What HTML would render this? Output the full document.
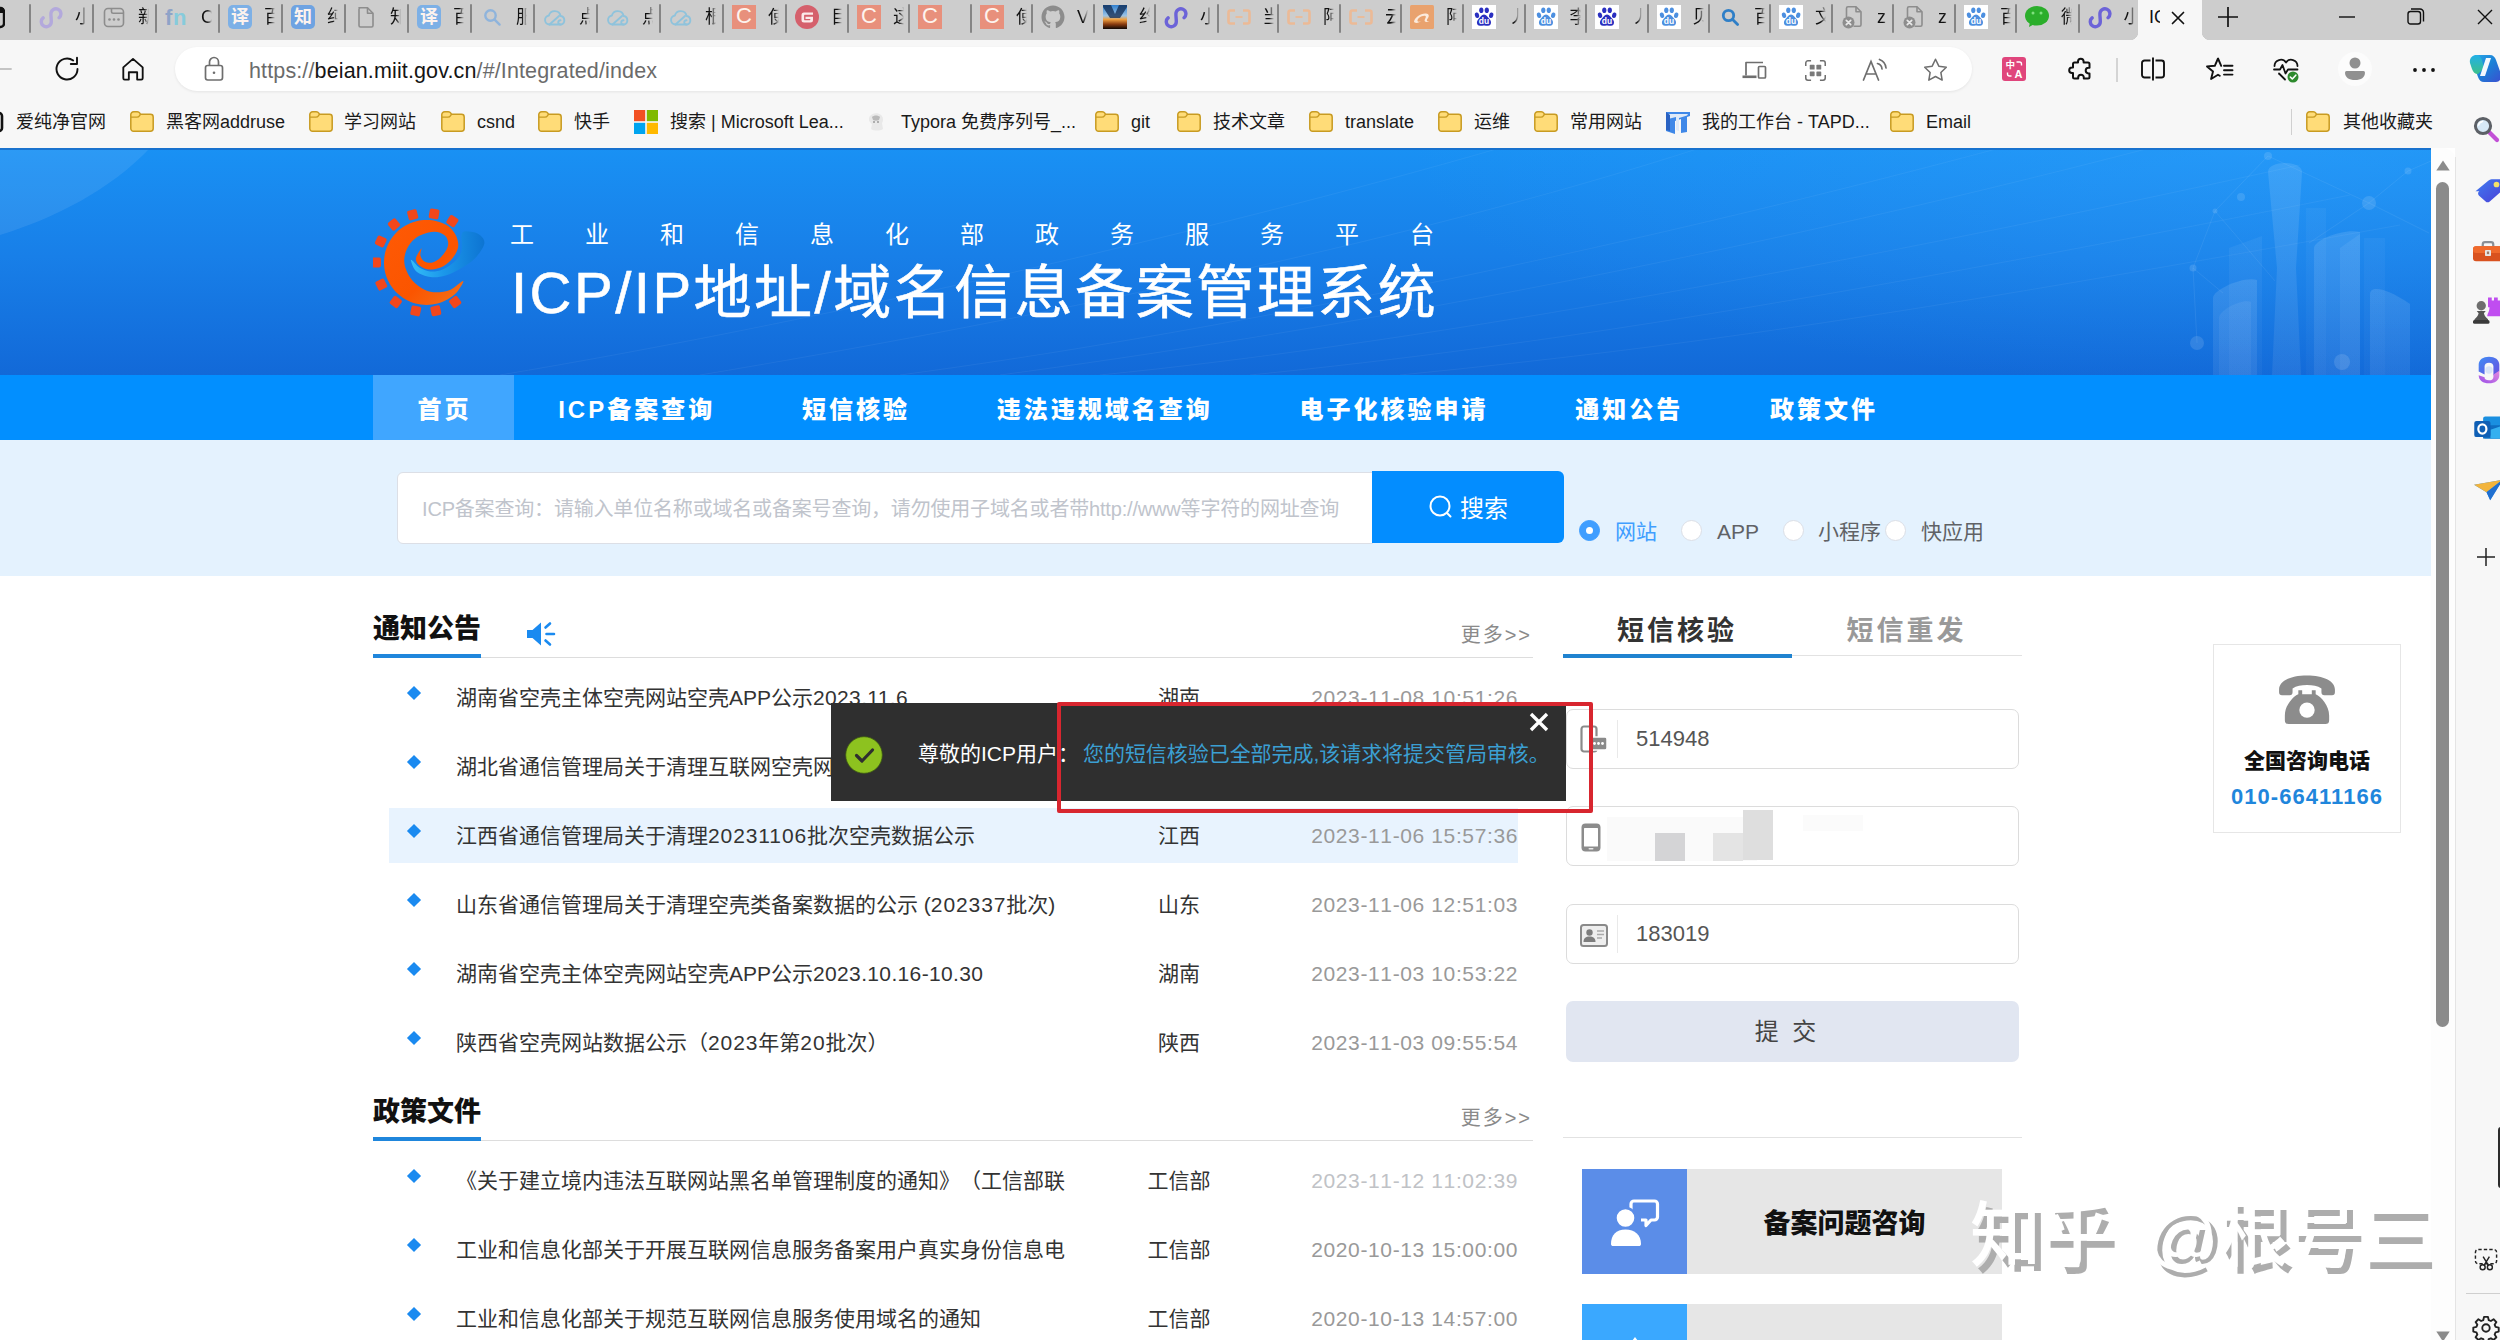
<!DOCTYPE html>
<html lang="zh-CN">
<head>
<meta charset="utf-8">
<title>ICP/IP地址/域名信息备案管理系统</title>
<style>
*{box-sizing:border-box}
html,body{margin:0;padding:0}
body{width:2500px;height:1340px;overflow:hidden;position:relative;background:#fff;font-family:"Liberation Sans","Noto Sans CJK SC",sans-serif;color:#333;text-spacing-trim:space-all}
.abs{position:absolute}
/* ---------- browser chrome ---------- */
#tabs{position:absolute;left:0;top:0;width:2500px;height:40px;background:#cdcdcd}
#addr{position:absolute;left:0;top:40px;width:2500px;height:57px;background:#f7f7f7}
#bm{position:absolute;left:0;top:97px;width:2500px;height:51px;background:#f7f7f7}
#urlpill{position:absolute;left:175px;top:7px;width:1797px;height:44px;border-radius:22px;background:#fff;box-shadow:0 1px 3px rgba(0,0,0,.08)}
.tab{position:absolute;top:0;height:40px}
.tab .sep{position:absolute;left:0;top:4px;width:2px;height:29px;background:#858585;border-radius:1px}
.tab .tic{position:absolute;left:10px;top:5px;width:24px;height:24px;display:block}
.tab .tic svg{display:block}
.tab .ttx{position:absolute;left:46px;top:4px;width:11px;height:28px;overflow:hidden;font-size:18px;line-height:26px;color:#111;white-space:nowrap;-webkit-mask-image:linear-gradient(90deg,#000 55%,transparent 100%);mask-image:linear-gradient(90deg,#000 55%,transparent 100%)}
.tab0{position:absolute;left:0;top:0;width:30px;height:40px}
#acttab{position:absolute;left:2138px;top:0;width:64px;height:41px;background:#f7f7f7;border-radius:0}
#acttab:before,#acttab:after{content:"";position:absolute;bottom:1px;width:8px;height:8px}
#acttab:before{left:-8px;background:radial-gradient(circle at 0 0,transparent 8px,#f7f7f7 8.500px)}
#acttab:after{right:-8px;background:radial-gradient(circle at 100% 0,transparent 8px,#f7f7f7 8.500px)}
#acttab .att{position:absolute;left:11px;top:4px;width:11px;overflow:hidden;font-size:18px;line-height:26px;color:#111;white-space:nowrap}
#acttab .atx{position:absolute;left:33px;top:11px}
#urlpill{position:absolute}
#url{position:absolute;left:74px;top:0;font-size:21.500px;line-height:48px;white-space:nowrap;letter-spacing:.130px}
.bic{position:absolute;top:13px}
.btx{position:absolute;top:0;font-size:18px;line-height:50px;color:#1a1a1a;white-space:nowrap}
/* ---------- page ---------- */
#page{position:absolute;left:0;top:148px;width:2431px;height:1192px;overflow:hidden;background:#fff}
#banner{position:absolute;left:0;top:0;width:2431px;height:227px;background:linear-gradient(180deg,#1991f4 0%,#187fe8 48%,#1269d8 100%)}
#nav{position:absolute;left:0;top:227px;width:2431px;height:65.500px;background:#028fff}
#search{position:absolute;left:0;top:292px;width:2431px;height:136px;background:#e4f2fe}

#logo{position:absolute;left:373px;top:59px;width:110px;height:110px}
#sub{position:absolute;left:510px;top:67px;font-size:24px;line-height:40px;letter-spacing:51px;color:#fff;white-space:nowrap;font-weight:400}
#ttl{position:absolute;left:511px;top:106.500px;font-size:58px;line-height:76px;letter-spacing:2.500px;color:#fff;white-space:nowrap;font-weight:400;-webkit-text-stroke:.600px #fff}
#navin{position:absolute;left:373px;top:0;height:65px;white-space:nowrap;font-size:0}
.ni{display:inline-block;height:65px;line-height:69px;padding:0 42.400px 0 44.400px;font-size:24px;font-weight:900;letter-spacing:3px;color:#fff}
.ni.act{background:#40a6ff}
#sinput{position:absolute;left:397px;top:32px;width:976px;height:72px;border:1px solid #dcdfe6;border-radius:6px 0 0 6px;background:#fff;font-size:20px;line-height:72px;color:#c0c4cc;padding-left:24px;white-space:nowrap;overflow:hidden;letter-spacing:-.180px}
#sbtn{position:absolute;left:1372px;top:31px;width:192px;height:72px;background:#038dff;border-radius:0 6px 6px 0;color:#fff;font-size:24px;line-height:72px}
#sbtn svg{position:absolute;left:56px;top:23px}
#sbtn span{position:absolute;left:88px;top:1.500px}
.rad{position:absolute;top:80px;width:21px;height:21px;border-radius:50%;background:#fff;border:1px solid #dcdfe6}
.rad.on{background:#409eff;border-color:#409eff}
.rad.on:after{content:"";position:absolute;left:6px;top:6px;width:7px;height:7px;border-radius:50%;background:#fff}
.rl{position:absolute;top:75px;font-size:21px;line-height:34px;color:#606266;white-space:nowrap}
#left{position:absolute;left:373px;top:0;width:1160px;height:1192px}
.sech{position:absolute;left:0;width:1160px;height:58px;border-bottom:1px solid #ddd}
.secht{position:absolute;left:0;top:0;height:58px;font-size:27px;font-weight:900;line-height:58px;color:#111;border-bottom:4px solid #1f86dc;white-space:nowrap}
.horn{position:absolute;left:153px;top:21px}
.more{position:absolute;right:1px;top:17px;font-size:20px;line-height:36px;color:#8a8a8a;letter-spacing:2px}
.row{position:absolute;left:16px;width:1129px;height:55px;font-size:21px;line-height:55px;color:#333;white-space:nowrap}
.row.hl{background:#e8f3fe}
.dia{position:absolute;left:20px;top:18px;width:10px;height:10px;background:#1a8af0;transform:rotate(45deg)}
.rt{position:absolute;left:67px;top:0}
.dg{letter-spacing:.900px}
.dg2{letter-spacing:.350px}
.rp{position:absolute;left:730px;top:0;width:120px;text-align:center}
.rd{position:absolute;right:0;top:0;color:#999;font-size:21px;letter-spacing:.620px;font-kerning:none}
#right{position:absolute;left:1563px;top:448px;width:459px;height:760px}
.rtab{position:absolute;top:3px;height:58px;line-height:64px;font-size:27px;font-weight:700;letter-spacing:3px;text-align:center;white-space:nowrap}
.inp{position:absolute;left:3px;width:453px;height:60px;border:1px solid #dcdcdc;border-radius:7px;background:#fff}
.inp .pre{position:absolute;left:12px;top:14px}
.inp .dv{position:absolute;left:50px;top:10px;width:1px;height:38px;background:#e9e9e9}
.inp .val{position:absolute;left:69px;top:0;font-size:22px;line-height:58px;color:#555;letter-spacing:0}
.mz{position:absolute;display:block}
#submit{position:absolute;left:3px;top:405px;width:453px;height:61px;border-radius:7px;background:#e1e6f1;font-size:24px;line-height:61px;color:#444;text-align:center;padding-right:14px;word-spacing:7px}
.card{position:absolute;left:19px;width:420px;height:105px;background:#e6e6e6}
.cic{position:absolute;left:0;top:0;width:105px;height:105px}
.cic svg{position:absolute;left:25px;top:25px}
.ctx{position:absolute;left:105px;top:0;width:315px;height:105px;line-height:111px;font-size:27px;font-weight:900;color:#111;text-align:center}
#tel{position:absolute;left:2213px;top:496px;width:188px;height:189px;border:1px solid #e6e6e6;background:#fff}
#tel1{position:absolute;left:0;top:98px;width:186px;text-align:center;font-size:21px;font-weight:900;color:#111;line-height:36px}
#tel2{position:absolute;left:0;top:134px;width:186px;text-align:center;font-size:22px;font-weight:700;color:#1f86dc;line-height:36px;letter-spacing:1.050px}
#toast{position:absolute;left:831px;top:554.500px;width:734.500px;height:98px;background:#2f2f2f}
#ticon{position:absolute;left:14px;top:33px}
#tt1{position:absolute;left:87px;top:31px;font-size:21px;line-height:40px;color:#fff;white-space:nowrap}
#tt2{position:absolute;left:252px;top:31px;font-size:21px;line-height:40px;color:#3b9fd2;white-space:nowrap;letter-spacing:-.050px}
#tclose{position:absolute;left:698px;top:9.500px}
#redbox{position:absolute;left:1056.500px;top:553.500px;width:536px;height:111.500px;border:4px solid #d8262f;border-radius:2px}
/* ---------- scrollbar + sidebar ---------- */
#sb{position:absolute;left:2431px;top:148px;width:24px;height:1192px;background:#fdfdfd;border-radius:0 12px 0 0;overflow:hidden}
#side{position:absolute;left:2455px;top:97px;width:45px;height:1243px;background:#f7f7f7;overflow:hidden}
#side:before{content:"";position:absolute;left:0;top:60px;width:1px;height:1190px;background:#e4e4e4}
#wm{position:absolute;left:1970px;top:1188px;font-size:71px;line-height:96px;font-weight:500;color:#fff;text-shadow:6px 7px 0 #adadad;white-space:nowrap;word-spacing:14px;font-family:"Liberation Sans","Noto Sans CJK SC",sans-serif}
</style>
</head>
<body>
<div id="tabs">
<!--TABS-->
<div class="tab0"><svg width="14" height="24" viewBox="10 0 14 24" style="position:absolute;left:-9px;top:5px"><rect x="12" y="3" width="11" height="19" rx="3.500" fill="none" stroke="#111" stroke-width="2.400"/><rect x="12" y="3" width="11" height="5" fill="#111"/></svg></div>
<div class="tab" style="left:29px;width:63px"><i class="sep"></i><span class="tic"><svg width="24" height="24" viewBox="0 0 24 24" fill="none" stroke="#b3a9dc" stroke-width="3.4" stroke-linecap="round"><path d="M20.1 12.7A5 5 0 1 0 11.9 8.9C11.9 12 12.3 13.5 12.3 16.7A5 5 0 1 1 4.100 12.900"/></svg></span><span class="ttx">小</span></div>
<div class="tab" style="left:92px;width:63px"><i class="sep"></i><span class="tic"><svg width="24" height="24" viewBox="0 0 24 24" fill="none" stroke="#8d8d8d" stroke-width="1.6"><rect x="2.5" y="3.5" width="19" height="18" rx="3.5"/><path d="M9.5 3.5v3.2a1.6 1.6 0 0 0 1.6 1.6h10.4"/><g fill="#8d8d8d" stroke="none"><circle cx="7.5" cy="14.5" r="1.3"/><circle cx="12" cy="14.5" r="1.3"/><circle cx="16.500" cy="14.5" r="1.3"/></g></svg></span><span class="ttx">新</span></div>
<div class="tab" style="left:155px;width:63px"><i class="sep"></i><span class="tic"><svg width="24" height="24" viewBox="0 0 24 24"><text x="0" y="20" font-family="Liberation Sans,sans-serif" font-weight="700" font-size="22" fill="#8ea3c8">f</text><text x="8" y="20" font-family="Liberation Sans,sans-serif" font-weight="700" font-size="22" fill="#86cbdc">n</text></svg></span><span class="ttx">C</span></div>
<div class="tab" style="left:218px;width:63px"><i class="sep"></i><span class="tic"><svg width="24" height="24" viewBox="0 0 24 24"><rect x="0" y="0" width="24" height="24" rx="5" fill="#7db0e6"/><text x="12" y="18.2" text-anchor="middle" font-family="Liberation Sans,Noto Sans CJK SC,sans-serif" font-weight="700" font-size="18" fill="#fdf3ee">译</text></svg></span><span class="ttx">百</span></div>
<div class="tab" style="left:281px;width:63px"><i class="sep"></i><span class="tic"><svg width="24" height="24" viewBox="0 0 24 24"><rect x="0" y="0" width="24" height="24" rx="5" fill="#6ea3e2"/><text x="12" y="18.2" text-anchor="middle" font-family="Liberation Sans,Noto Sans CJK SC,sans-serif" font-weight="700" font-size="18" fill="#fdf3ee">知</text></svg></span><span class="ttx">纯</span></div>
<div class="tab" style="left:344px;width:63px"><i class="sep"></i><span class="tic"><svg width="24" height="24" viewBox="0 0 24 24" fill="none" stroke="#8d8d8d" stroke-width="1.6" stroke-linejoin="round"><path d="M5 2.8h8.5l5.5 5.5v12.2a1.5 1.5 0 0 1-1.500 1.500h-11a1.500 1.500 0 0 1-1.500-1.500v-16.200a1.500 1.500 0 0 1 1.500-1.500z"/><path d="M13.500 2.800v5.500h5.500"/></svg></span><span class="ttx">知</span></div>
<div class="tab" style="left:407px;width:63px"><i class="sep"></i><span class="tic"><svg width="24" height="24" viewBox="0 0 24 24"><rect x="0" y="0" width="24" height="24" rx="5" fill="#7db0e6"/><text x="12" y="18.2" text-anchor="middle" font-family="Liberation Sans,Noto Sans CJK SC,sans-serif" font-weight="700" font-size="18" fill="#fdf3ee">译</text></svg></span><span class="ttx">百</span></div>
<div class="tab" style="left:470px;width:63px"><i class="sep"></i><span class="tic"><svg width="24" height="24" viewBox="0 0 24 24" fill="none" stroke="#8fb4dc" stroke-width="2.4" stroke-linecap="round"><circle cx="10.500" cy="10.500" r="5.200"/><path d="M14.600 14.600l5 5"/></svg></span><span class="ttx">服</span></div>
<div class="tab" style="left:533px;width:63px"><i class="sep"></i><span class="tic"><svg width="24" height="24" viewBox="0 0 24 24" fill="none" stroke="#8fc3dc" stroke-width="1.900" stroke-linecap="round" stroke-linejoin="round"><path d="M6.500 19.500a4.500 4.500 0 0 1-.6-8.950a6 6 0 0 1 11.700 0.500a4.300 4.300 0 0 1 0.400 8.450z"/><path d="M6.500 19.500l9.500-8.500"/><path d="M17.500 19.500c-3 0-3-4 0-4.200"/></svg></span><span class="ttx">点</span></div>
<div class="tab" style="left:596px;width:63px"><i class="sep"></i><span class="tic"><svg width="24" height="24" viewBox="0 0 24 24" fill="none" stroke="#8fc3dc" stroke-width="1.900" stroke-linecap="round" stroke-linejoin="round"><path d="M6.500 19.500a4.500 4.500 0 0 1-.6-8.950a6 6 0 0 1 11.700 0.500a4.300 4.300 0 0 1 0.400 8.450z"/><path d="M6.500 19.500l9.500-8.500"/><path d="M17.500 19.500c-3 0-3-4 0-4.200"/></svg></span><span class="ttx">点</span></div>
<div class="tab" style="left:659px;width:63px"><i class="sep"></i><span class="tic"><svg width="24" height="24" viewBox="0 0 24 24" fill="none" stroke="#8fc3dc" stroke-width="1.900" stroke-linecap="round" stroke-linejoin="round"><path d="M6.500 19.500a4.500 4.500 0 0 1-.6-8.950a6 6 0 0 1 11.700 0.500a4.300 4.300 0 0 1 0.400 8.450z"/><path d="M6.500 19.500l9.500-8.500"/><path d="M17.500 19.500c-3 0-3-4 0-4.200"/></svg></span><span class="ttx">根</span></div>
<div class="tab" style="left:722px;width:63px"><i class="sep"></i><span class="tic"><svg width="24" height="24" viewBox="0 0 24 24"><rect x="0" y="0" width="24" height="24" rx="0" fill="#e8907c"/><text x="12" y="18.2" text-anchor="middle" font-family="Liberation Sans,Noto Sans CJK SC,sans-serif" font-weight="400" font-size="22" fill="#fdf3ee">C</text></svg></span><span class="ttx">使</span></div>
<div class="tab" style="left:785px;width:62px"><i class="sep"></i><span class="tic"><svg width="24" height="24" viewBox="0 0 24 24"><circle cx="12" cy="12" r="12" fill="#d5606c"/><path d="M18 7.500h-9a2.500 2.500 0 0 0-2.500 2.500v5a2.500 2.500 0 0 0 2.500 2.500h6.500a2.500 2.500 0 0 0 2.500-2.500v-3.200h-7.500v2.200h4.800v0.600a0.600 0.600 0 0 1-0.600 0.600h-5a0.600 0.600 0 0 1-0.600-0.600v-4.200a0.600 0.600 0 0 1 0.600-0.600h8.300z" fill="#fbeaea"/></svg></span><span class="ttx">目</span></div>
<div class="tab" style="left:847px;width:61px"><i class="sep"></i><span class="tic"><svg width="24" height="24" viewBox="0 0 24 24"><rect x="0" y="0" width="24" height="24" rx="0" fill="#e8907c"/><text x="12" y="18.2" text-anchor="middle" font-family="Liberation Sans,Noto Sans CJK SC,sans-serif" font-weight="400" font-size="22" fill="#fdf3ee">C</text></svg></span><span class="ttx">这</span></div>
<div class="tab" style="left:908px;width:62px"><i class="sep"></i><span class="tic"><svg width="24" height="24" viewBox="0 0 24 24"><rect x="0" y="0" width="24" height="24" rx="0" fill="#e8907c"/><text x="12" y="18.2" text-anchor="middle" font-family="Liberation Sans,Noto Sans CJK SC,sans-serif" font-weight="400" font-size="22" fill="#fdf3ee">C</text></svg></span><span class="ttx"></span></div>
<div class="tab" style="left:970px;width:61px"><i class="sep"></i><span class="tic"><svg width="24" height="24" viewBox="0 0 24 24"><rect x="0" y="0" width="24" height="24" rx="0" fill="#e8907c"/><text x="12" y="18.2" text-anchor="middle" font-family="Liberation Sans,Noto Sans CJK SC,sans-serif" font-weight="400" font-size="22" fill="#fdf3ee">C</text></svg></span><span class="ttx">使</span></div>
<div class="tab" style="left:1031px;width:62px"><i class="sep"></i><span class="tic"><svg width="24" height="24" viewBox="0 0 24 24"><path fill="#8c8c8c" d="M12 .5C5.650.5.500 5.650.500 12c0 5.080 3.290 9.390 7.860 10.910.570.110.780-.250.780-.550 0-.270-.010-1.170-.020-2.120-3.200.700-3.870-1.360-3.870-1.360-.520-1.330-1.280-1.680-1.280-1.680-1.040-.710.080-.700.080-.700 1.150.080 1.760 1.190 1.760 1.190 1.030 1.760 2.690 1.250 3.350.960.100-.740.400-1.250.730-1.540-2.550-.290-5.240-1.280-5.240-5.680 0-1.260.450-2.280 1.180-3.090-.120-.290-.510-1.460.110-3.040 0 0 .960-.310 3.160 1.180a10.990 10.990 0 0 1 5.750 0c2.200-1.490 3.160-1.180 3.160-1.180.620 1.580.230 2.750.110 3.040.740.810 1.180 1.830 1.180 3.090 0 4.410-2.690 5.380-5.250 5.670.410.360.780 1.060.780 2.130 0 1.540-.010 2.780-.010 3.160 0 .310.210.670.790.550C20.210 21.390 23.500 17.080 23.500 12 23.500 5.650 18.350.500 12 .500z"/></svg></span><span class="ttx">V</span></div>
<div class="tab" style="left:1093px;width:61px"><i class="sep"></i><span class="tic"><svg width="24" height="24" viewBox="0 0 24 24"><defs><linearGradient id="pg" x1="0" y1="0" x2="0" y2="1"><stop offset="0" stop-color="#2f7fd0"/><stop offset=".45" stop-color="#9cc4e6"/><stop offset=".6" stop-color="#f0a040"/><stop offset=".8" stop-color="#8a3c10"/><stop offset="1" stop-color="#100806"/></linearGradient></defs><rect width="24" height="24" fill="url(#pg)"/><path d="M0 0h8l4 9 4-9h8v2l-7 11h-10l-7-11z" fill="#102a50" opacity=".75"/></svg></span><span class="ttx">约</span></div>
<div class="tab" style="left:1154px;width:62.5px"><i class="sep"></i><span class="tic"><svg width="24" height="24" viewBox="0 0 24 24" fill="none" stroke="#6c63d8" stroke-width="3.4" stroke-linecap="round"><path d="M20.1 12.7A5 5 0 1 0 11.9 8.9C11.9 12 12.3 13.5 12.3 16.7A5 5 0 1 1 4.100 12.900"/></svg></span><span class="ttx">小</span></div>
<div class="tab" style="left:1216.5px;width:60.5px"><i class="sep"></i><span class="tic"><svg width="24" height="24" viewBox="0 0 24 24" fill="none" stroke="#ecba96" stroke-width="2.600" stroke-linejoin="round"><path d="M8 5.500h-4.500a2 2 0 0 0-2 2v9a2 2 0 0 0 2 2h4.500"/><path d="M16 5.500h4.500a2 2 0 0 1 2 2v9a2 2 0 0 1-2 2h-4.500"/><path d="M8.500 12h7" stroke-width="1.800"/></svg></span><span class="ttx">当</span></div>
<div class="tab" style="left:1277px;width:62px"><i class="sep"></i><span class="tic"><svg width="24" height="24" viewBox="0 0 24 24" fill="none" stroke="#ecba96" stroke-width="2.600" stroke-linejoin="round"><path d="M8 5.500h-4.500a2 2 0 0 0-2 2v9a2 2 0 0 0 2 2h4.500"/><path d="M16 5.500h4.500a2 2 0 0 1 2 2v9a2 2 0 0 1-2 2h-4.500"/><path d="M8.500 12h7" stroke-width="1.800"/></svg></span><span class="ttx">阿</span></div>
<div class="tab" style="left:1339px;width:61px"><i class="sep"></i><span class="tic"><svg width="24" height="24" viewBox="0 0 24 24" fill="none" stroke="#ecba96" stroke-width="2.600" stroke-linejoin="round"><path d="M8 5.500h-4.500a2 2 0 0 0-2 2v9a2 2 0 0 0 2 2h4.500"/><path d="M16 5.500h4.500a2 2 0 0 1 2 2v9a2 2 0 0 1-2 2h-4.500"/><path d="M8.500 12h7" stroke-width="1.800"/></svg></span><span class="ttx">云</span></div>
<div class="tab" style="left:1400px;width:62px"><i class="sep"></i><span class="tic"><svg width="24" height="24" viewBox="0 0 24 24"><rect width="24" height="24" rx="1.500" fill="#e9a26e"/><path d="M4 16.500c1-4.500 7-8.500 12-8 3 .4 3.500 2.500 2 4.500-1.500 2-2 3.500 1.500 3.300-3.500 1.500-6 .5-4.500-2.300 1-1.800 1.500-3.300-.8-3.300-3 0-7.200 2.800-6.700 5.300.3 1.300 2.500.8 3.800-.2-1.500 2-6.800 3.200-7.300.7z" fill="#fbeadc"/></svg></span><span class="ttx">阿</span></div>
<div class="tab" style="left:1462px;width:61.5px"><i class="sep"></i><span class="tic"><svg width="24" height="24" viewBox="0 0 24 24"><rect width="24" height="24" fill="#fff"/><g fill="#2a2fc0"><ellipse cx="5" cy="10.200" rx="2.100" ry="2.800" transform="rotate(-15 5 10.200)"/><ellipse cx="9.300" cy="5.300" rx="2.100" ry="2.800"/><ellipse cx="14.800" cy="5.300" rx="2.100" ry="2.800"/><ellipse cx="19.200" cy="10.200" rx="2.100" ry="2.800" transform="rotate(15 19.200 10.200)"/><path d="M12 9.500c2.500 0 3.500 2.500 5.500 4.500 2.200 2.100 2.300 6.500-1.500 6.800-1.800.100-2.500-.400-4-.400s-2.200.500-4 .400c-3.800-.300-3.700-4.700-1.500-6.800 2-2 3-4.500 5.500-4.500z"/></g><text x="12" y="19.300" text-anchor="middle" font-family="Liberation Sans,sans-serif" font-weight="700" font-size="8.500" fill="#fff">du</text></svg></span><span class="ttx">丿</span></div>
<div class="tab" style="left:1523.5px;width:61.5px"><i class="sep"></i><span class="tic"><svg width="24" height="24" viewBox="0 0 24 24"><rect width="24" height="24" fill="#fff"/><g fill="#4c8fe0"><ellipse cx="5" cy="10.200" rx="2.100" ry="2.800" transform="rotate(-15 5 10.200)"/><ellipse cx="9.300" cy="5.300" rx="2.100" ry="2.800"/><ellipse cx="14.800" cy="5.300" rx="2.100" ry="2.800"/><ellipse cx="19.200" cy="10.200" rx="2.100" ry="2.800" transform="rotate(15 19.200 10.200)"/><path d="M12 9.500c2.500 0 3.500 2.500 5.500 4.500 2.200 2.100 2.300 6.500-1.500 6.800-1.800.100-2.500-.400-4-.400s-2.200.500-4 .400c-3.800-.300-3.700-4.700-1.500-6.800 2-2 3-4.500 5.500-4.500z"/></g><text x="12" y="19.300" text-anchor="middle" font-family="Liberation Sans,sans-serif" font-weight="700" font-size="8.500" fill="#fff">du</text></svg></span><span class="ttx">李</span></div>
<div class="tab" style="left:1585px;width:61.5px"><i class="sep"></i><span class="tic"><svg width="24" height="24" viewBox="0 0 24 24"><rect width="24" height="24" fill="#fff"/><g fill="#2a2fc0"><ellipse cx="5" cy="10.200" rx="2.100" ry="2.800" transform="rotate(-15 5 10.200)"/><ellipse cx="9.300" cy="5.300" rx="2.100" ry="2.800"/><ellipse cx="14.800" cy="5.300" rx="2.100" ry="2.800"/><ellipse cx="19.200" cy="10.200" rx="2.100" ry="2.800" transform="rotate(15 19.200 10.200)"/><path d="M12 9.500c2.500 0 3.500 2.500 5.500 4.500 2.200 2.100 2.300 6.500-1.500 6.800-1.800.100-2.500-.400-4-.400s-2.200.500-4 .400c-3.800-.300-3.700-4.700-1.500-6.800 2-2 3-4.500 5.500-4.500z"/></g><text x="12" y="19.300" text-anchor="middle" font-family="Liberation Sans,sans-serif" font-weight="700" font-size="8.500" fill="#fff">du</text></svg></span><span class="ttx">丿</span></div>
<div class="tab" style="left:1646.5px;width:61.5px"><i class="sep"></i><span class="tic"><svg width="24" height="24" viewBox="0 0 24 24"><rect width="24" height="24" fill="#fff"/><g fill="#4c8fe0"><ellipse cx="5" cy="10.200" rx="2.100" ry="2.800" transform="rotate(-15 5 10.200)"/><ellipse cx="9.300" cy="5.300" rx="2.100" ry="2.800"/><ellipse cx="14.800" cy="5.300" rx="2.100" ry="2.800"/><ellipse cx="19.200" cy="10.200" rx="2.100" ry="2.800" transform="rotate(15 19.200 10.200)"/><path d="M12 9.500c2.500 0 3.500 2.500 5.500 4.500 2.200 2.100 2.300 6.500-1.500 6.800-1.800.100-2.500-.400-4-.400s-2.200.500-4 .400c-3.800-.300-3.700-4.700-1.500-6.800 2-2 3-4.500 5.500-4.500z"/></g><text x="12" y="19.300" text-anchor="middle" font-family="Liberation Sans,sans-serif" font-weight="700" font-size="8.500" fill="#fff">du</text></svg></span><span class="ttx">贝</span></div>
<div class="tab" style="left:1708px;width:61px"><i class="sep"></i><span class="tic"><svg width="24" height="24" viewBox="0 0 24 24" fill="none" stroke="#2f7fc7" stroke-width="2.8" stroke-linecap="round"><circle cx="10.500" cy="10.500" r="5.200"/><path d="M14.600 14.600l5 5"/></svg></span><span class="ttx">百</span></div>
<div class="tab" style="left:1769px;width:62px"><i class="sep"></i><span class="tic"><svg width="24" height="24" viewBox="0 0 24 24"><rect width="24" height="24" fill="#fff"/><g fill="#4c8fe0"><ellipse cx="5" cy="10.200" rx="2.100" ry="2.800" transform="rotate(-15 5 10.200)"/><ellipse cx="9.300" cy="5.300" rx="2.100" ry="2.800"/><ellipse cx="14.800" cy="5.300" rx="2.100" ry="2.800"/><ellipse cx="19.200" cy="10.200" rx="2.100" ry="2.800" transform="rotate(15 19.200 10.200)"/><path d="M12 9.500c2.500 0 3.500 2.500 5.500 4.500 2.200 2.100 2.300 6.500-1.500 6.800-1.800.100-2.500-.400-4-.400s-2.200.500-4 .400c-3.800-.300-3.700-4.700-1.500-6.800 2-2 3-4.500 5.500-4.500z"/></g><text x="12" y="19.300" text-anchor="middle" font-family="Liberation Sans,sans-serif" font-weight="700" font-size="8.500" fill="#fff">du</text></svg></span><span class="ttx">文</span></div>
<div class="tab" style="left:1831px;width:61px"><i class="sep"></i><span class="tic"><svg width="24" height="24" viewBox="0 0 24 24"><path d="M7 1.800h8l5 5v13a1.500 1.500 0 0 1-1.500 1.500h-6" fill="none" stroke="#8d8d8d" stroke-width="1.600" stroke-linejoin="round"/><path d="M7 1.800a1.500 1.500 0 0 0-1.500 1.500v9" fill="none" stroke="#8d8d8d" stroke-width="1.600"/><path d="M15 1.800v5h5" fill="none" stroke="#8d8d8d" stroke-width="1.600" stroke-linejoin="round"/><circle cx="7.500" cy="17.500" r="6" fill="#8d8d8d"/><path d="M5.300 15.300l4.400 4.400m0-4.400l-4.400 4.400" stroke="#e8e8e8" stroke-width="1.700" stroke-linecap="round"/></svg></span><span class="ttx">z</span></div>
<div class="tab" style="left:1892px;width:62px"><i class="sep"></i><span class="tic"><svg width="24" height="24" viewBox="0 0 24 24"><path d="M7 1.800h8l5 5v13a1.500 1.500 0 0 1-1.500 1.500h-6" fill="none" stroke="#8d8d8d" stroke-width="1.600" stroke-linejoin="round"/><path d="M7 1.800a1.500 1.500 0 0 0-1.500 1.500v9" fill="none" stroke="#8d8d8d" stroke-width="1.600"/><path d="M15 1.800v5h5" fill="none" stroke="#8d8d8d" stroke-width="1.600" stroke-linejoin="round"/><circle cx="7.500" cy="17.500" r="6" fill="#8d8d8d"/><path d="M5.300 15.300l4.400 4.400m0-4.400l-4.400 4.400" stroke="#e8e8e8" stroke-width="1.700" stroke-linecap="round"/></svg></span><span class="ttx">z</span></div>
<div class="tab" style="left:1954px;width:61px"><i class="sep"></i><span class="tic"><svg width="24" height="24" viewBox="0 0 24 24"><rect width="24" height="24" fill="#fff"/><g fill="#4c8fe0"><ellipse cx="5" cy="10.200" rx="2.100" ry="2.800" transform="rotate(-15 5 10.200)"/><ellipse cx="9.300" cy="5.300" rx="2.100" ry="2.800"/><ellipse cx="14.800" cy="5.300" rx="2.100" ry="2.800"/><ellipse cx="19.200" cy="10.200" rx="2.100" ry="2.800" transform="rotate(15 19.200 10.200)"/><path d="M12 9.500c2.500 0 3.500 2.500 5.500 4.500 2.200 2.100 2.300 6.500-1.500 6.800-1.800.100-2.500-.400-4-.400s-2.200.500-4 .400c-3.800-.300-3.700-4.700-1.500-6.800 2-2 3-4.500 5.500-4.500z"/></g><text x="12" y="19.300" text-anchor="middle" font-family="Liberation Sans,sans-serif" font-weight="700" font-size="8.500" fill="#fff">du</text></svg></span><span class="ttx">百</span></div>
<div class="tab" style="left:2015px;width:62.5px"><i class="sep"></i><span class="tic"><svg width="24" height="24" viewBox="0 0 24 24"><ellipse cx="12" cy="10.800" rx="12" ry="9.800" fill="#2bae2b"/><path d="M5 17l-1 5 5.500-3z" fill="#2bae2b"/><circle cx="8" cy="8" r="1.500" fill="#7fe07f"/><circle cx="16" cy="8" r="1.500" fill="#7fe07f"/></svg></span><span class="ttx">微</span></div>
<div class="tab" style="left:2077.5px;width:59.5px"><i class="sep"></i><span class="tic"><svg width="24" height="24" viewBox="0 0 24 24" fill="none" stroke="#6c63d8" stroke-width="3.4" stroke-linecap="round"><path d="M20.1 12.7A5 5 0 1 0 11.9 8.9C11.9 12 12.3 13.5 12.3 16.7A5 5 0 1 1 4.100 12.900"/></svg></span><span class="ttx">小</span></div>
<!--/TABS-->
<div id="acttab"><span class="att">IC</span><svg class="atx" width="14" height="14" viewBox="0 0 14 14"><path d="M1.500 1.500l11 11m0-11l-11 11" stroke="#111" stroke-width="1.700" fill="none" stroke-linecap="round"/></svg></div>
<svg class="abs" style="left:2217px;top:6px" width="22" height="22" viewBox="0 0 22 22"><path d="M11 1v20M1 11h20" stroke="#111" stroke-width="1.700" fill="none"/></svg>
<svg class="abs" style="left:2339px;top:16px" width="16" height="2" viewBox="0 0 16 2"><path d="M0 1h16" stroke="#111" stroke-width="1.400"/></svg>
<svg class="abs" style="left:2407px;top:8px" width="18" height="18" viewBox="0 0 18 18" fill="none" stroke="#111" stroke-width="1.400"><rect x="1" y="3.500" width="12.500" height="12.500" rx="2.500"/><path d="M4 1h9a3.500 3.500 0 0 1 3.500 3.500v9"/></svg>
<svg class="abs" style="left:2477px;top:9px" width="16" height="16" viewBox="0 0 16 16"><path d="M1 1l14 14m0-14l-14 14" stroke="#111" stroke-width="1.400" fill="none"/></svg>
</div>
<div id="addr">
<svg class="abs" style="left:-14px;top:17px" width="26" height="24" viewBox="0 0 26 24"><path d="M3 12h22M3 12l9-9M3 12l9 9" stroke="#c4c4c4" stroke-width="1.800" fill="none" stroke-linecap="round"/></svg>
<svg class="abs" style="left:53px;top:15px" width="28" height="28" viewBox="0 0 28 28" fill="none" stroke="#111" stroke-width="1.900" stroke-linecap="round" stroke-linejoin="round"><path d="M24.500 14a10.500 10.500 0 1 1-4.300-8.480"/><path d="M24 2.800v6.200h-6.200"/></svg>
<svg class="abs" style="left:121px;top:16px" width="24" height="26" viewBox="0 0 26 28" fill="none" stroke="#111" stroke-width="2" stroke-linejoin="round"><path d="M2.500 12.300l10.500-9.300 10.500 9.300v11.700a1.500 1.500 0 0 1-1.500 1.500h-4.500v-8h-9v8h-4.500a1.500 1.500 0 0 1-1.500-1.500z"/></svg>
<div id="urlpill">
<svg class="abs" style="left:28px;top:8px" width="22" height="28" viewBox="0 0 22 28" fill="none" stroke="#6e6e6e" stroke-width="1.700"><rect x="2.500" y="10.500" width="17" height="14.500" rx="2.200"/><path d="M6.500 10.500v-3.500a4.500 4.500 0 0 1 9 0v3.500"/><circle cx="11" cy="17.800" r="1.300" fill="#6e6e6e" stroke="none"/></svg>
<span id="url"><span style="color:#6b6b6b">https://</span><span style="color:#151515">beian.miit.gov.cn</span><span style="color:#6b6b6b">/#/Integrated/index</span></span>
<svg class="abs" style="left:1565px;top:10px" width="28" height="26" viewBox="0 0 28 26" fill="none" stroke="#6e6e6e" stroke-width="1.700" stroke-linejoin="round"><path d="M23 5.500h-17v13"/><path d="M2.500 19.800h14" stroke-width="2.600"/><rect x="18.500" y="9.500" width="7" height="11.500" rx="1"/></svg>
<svg class="abs" style="left:1628.500px;top:11.500px" width="23" height="23" viewBox="0 0 26 26" fill="none" stroke="#6e6e6e" stroke-width="1.700"><path d="M2 8v-3.500a2.500 2.500 0 0 1 2.500-2.500h3.500M18 2h3.500a2.500 2.500 0 0 1 2.500 2.500v3.500M24 18v3.500a2.500 2.500 0 0 1-2.500 2.500h-3.500M8 24h-3.500a2.500 2.500 0 0 1-2.500-2.500v-3.500"/><g fill="#7a7a7a" stroke="none"><rect x="6.500" y="6.500" width="5.500" height="5.500" rx=".8"/><rect x="14" y="6.500" width="5.500" height="5.500" rx=".8"/><rect x="6.500" y="14" width="5.500" height="5.500" rx=".8"/><rect x="14" y="14" width="5.500" height="5.500" rx=".8"/></g></svg>
<svg class="abs" style="left:1686px;top:9px" width="28" height="28" viewBox="0 0 28 28" fill="none" stroke="#6e6e6e" stroke-width="1.700" stroke-linecap="round"><path d="M2.500 24l7.500-18.500 7.500 18.500M5 18h10"/><path d="M16.500 7.500a6 6 0 0 1 4.500 5.500M18.500 3.500a10 10 0 0 1 6.500 8.500"/></svg>
<svg class="abs" style="left:1746.500px;top:9.500px" width="27" height="25.200" viewBox="0 0 30 28" fill="none" stroke="#6e6e6e" stroke-width="1.700" stroke-linejoin="round"><path d="M15 2.500l3.700 7.700 8.300 1.200-6 5.900 1.400 8.400-7.400-4-7.400 4 1.400-8.400-6-5.900 8.300-1.200z"/></svg>
</div>
<svg class="abs" style="left:2002px;top:17px" width="24" height="24" viewBox="0 0 24 24"><rect width="24" height="24" rx="3" fill="#e0457c"/><text x="3.500" y="11" font-family="Liberation Sans,Noto Sans CJK SC,sans-serif" font-weight="700" font-size="9.500" fill="#fff">中</text><text x="12.500" y="20.500" font-family="Liberation Sans,sans-serif" font-weight="700" font-size="11" fill="#fff">A</text><path d="M14.500 5h3a2 2 0 0 1 2 2v1.500M9.500 19h-2a2 2 0 0 1-2-2v-1.500" fill="none" stroke="#fff" stroke-width="1.400"/></svg>
<svg class="abs" style="left:2068px;top:16px" width="26" height="26" viewBox="0 0 26 26" fill="none" stroke="#111" stroke-width="2" stroke-linejoin="round"><path d="M10 5.500a2.800 2.800 0 0 1 5.600 0v1h4.400a1.500 1.500 0 0 1 1.500 1.500v3.800h-1a2.800 2.800 0 0 0 0 5.600h1v3.600a1.500 1.500 0 0 1-1.500 1.500h-4.200v-1a2.800 2.800 0 0 0-5.600 0v1h-3.700a1.500 1.500 0 0 1-1.500-1.500v-4h-1a2.800 2.800 0 0 1 0-5.600h1v-3.400a1.500 1.500 0 0 1 1.500-1.500h3.500z"/></svg>
<i class="abs" style="left:2116px;top:18px;width:2px;height:24px;background:#d4d4d4"></i>
<svg class="abs" style="left:2140px;top:16px" width="26" height="26" viewBox="0 0 26 26" fill="none" stroke="#111" stroke-width="1.900"><path d="M10.500 4.500h-6a2.500 2.500 0 0 0-2.500 2.500v12a2.500 2.500 0 0 0 2.500 2.500h6M15.500 4.500h6a2.500 2.500 0 0 1 2.500 2.500v12a2.500 2.500 0 0 1-2.500 2.500h-6M13 1.500v23"/></svg>
<svg class="abs" style="left:2206px;top:15px" width="28" height="28" viewBox="0 0 28 28" fill="none" stroke="#111" stroke-width="1.900" stroke-linejoin="round" stroke-linecap="round"><path d="M15.200 10.800l-3.200-7.300-3.200 7.300-7.800.600 6 5-1.900 7.600 6.900-4.200 1.700 1"/><path d="M18 10.800h8.500M18 15.200h8.500M18 19.600h8.500"/></svg>
<svg class="abs" style="left:2272px;top:15px" width="30" height="30" viewBox="0 0 30 30" fill="none" stroke="#111" stroke-width="1.800" stroke-linejoin="round" stroke-linecap="round"><path d="M2.500 11a6.300 6.300 0 0 1 11.500-3.500 6.300 6.300 0 0 1 11.500 3.500"/><path d="M2 14.500h6l2.500-4.500 3 8.500 2.500-4h9.500"/><path d="M7 18.500l6 6"/><circle cx="21" cy="22" r="5.500" fill="#2d8a2d" stroke="none"/><path d="M18.300 22l2 2 3.500-3.800" stroke="#fff" stroke-width="1.600"/></svg>
<div class="abs" style="left:2338px;top:12px;width:34px;height:34px;border-radius:17px;background:#fcfcfc"></div>
<svg class="abs" style="left:2343px;top:16px" width="24" height="26" viewBox="0 0 24 26" fill="#909090"><circle cx="12" cy="7" r="5.500"/><path d="M3.500 15h17a1.500 1.500 0 0 1 1.500 1.500c0 5-4 7.500-10 7.500s-10-2.500-10-7.500a1.500 1.500 0 0 1 1.500-1.500z"/></svg>
<svg class="abs" style="left:2412px;top:27px" width="24" height="6" viewBox="0 0 24 6" fill="#111"><circle cx="3" cy="3" r="1.900"/><circle cx="12" cy="3" r="1.900"/><circle cx="21" cy="3" r="1.900"/></svg>
<svg class="abs" style="left:2468px;top:12px" width="34" height="36" viewBox="0 0 34 36"><defs><linearGradient id="cp1" x1="0" y1="0" x2="1" y2="1"><stop offset="0" stop-color="#2aa9e8"/><stop offset=".5" stop-color="#1b7fd6"/><stop offset="1" stop-color="#3b4fd0"/></linearGradient><linearGradient id="cp2" x1="0" y1="0" x2="0" y2="1"><stop offset="0" stop-color="#23b0e8"/><stop offset="1" stop-color="#3bc08a"/></linearGradient></defs><path d="M8 3h14c3 0 5 2 6 5l5 14c1 4-1 8-5 8h-12c-3 0-5-2-6-5l-5-14c-1-4 1-8 3-8z" fill="url(#cp1)"/><path d="M8 3c3 0 5 2 6 5l2 8-6 6c-3 0-5-2-6-5l-2-6c-1-4 2-8 6-8z" fill="url(#cp2)"/><path d="M18 6l5 0-6 18-5 0z" fill="#fff" opacity=".95"/></svg>
</div>
<div id="bm">
<!--BM-->
<svg class="bic" style="left:-20px" width="24" height="24" viewBox="0 0 24 24"><rect x="3" y="3" width="19" height="18" rx="3" fill="none" stroke="#111" stroke-width="2.600"/></svg>
<span class="btx" style="left:16px">爱纯净官网</span>
<svg class="bic" style="left:130px;top:14px" width="24" height="22" viewBox="0 0 24 22"><path d="M.800 4.200a3 3 0 0 1 3-3.400h3.400c1.300 0 2 .400 2.600 1.300l.700 1.100h10a2.700 2.700 0 0 1 2.700 2.700v11.600a2.700 2.700 0 0 1-2.700 2.700h-17a2.700 2.700 0 0 1-2.700-2.700z" fill="#ffdc78" stroke="#c89b22" stroke-width="1.500"/><path d="M1 6.200h5.800c1.300 0 2.200-.600 2.800-1.600l.800-1.300" fill="none" stroke="#c89b22" stroke-width="1.300"/></svg>
<span class="btx" style="left:166px">黑客网addruse</span>
<svg class="bic" style="left:309px;top:14px" width="24" height="22" viewBox="0 0 24 22"><path d="M.800 4.200a3 3 0 0 1 3-3.400h3.400c1.300 0 2 .400 2.600 1.300l.700 1.100h10a2.700 2.700 0 0 1 2.700 2.700v11.600a2.700 2.700 0 0 1-2.700 2.700h-17a2.700 2.700 0 0 1-2.700-2.700z" fill="#ffdc78" stroke="#c89b22" stroke-width="1.500"/><path d="M1 6.200h5.800c1.300 0 2.200-.600 2.800-1.600l.800-1.300" fill="none" stroke="#c89b22" stroke-width="1.300"/></svg>
<span class="btx" style="left:344px">学习网站</span>
<svg class="bic" style="left:441px;top:14px" width="24" height="22" viewBox="0 0 24 22"><path d="M.800 4.200a3 3 0 0 1 3-3.400h3.400c1.300 0 2 .400 2.600 1.300l.700 1.100h10a2.700 2.700 0 0 1 2.700 2.700v11.600a2.700 2.700 0 0 1-2.700 2.700h-17a2.700 2.700 0 0 1-2.700-2.700z" fill="#ffdc78" stroke="#c89b22" stroke-width="1.500"/><path d="M1 6.200h5.800c1.300 0 2.200-.600 2.800-1.600l.800-1.300" fill="none" stroke="#c89b22" stroke-width="1.300"/></svg>
<span class="btx" style="left:477px">csnd</span>
<svg class="bic" style="left:538px;top:14px" width="24" height="22" viewBox="0 0 24 22"><path d="M.800 4.200a3 3 0 0 1 3-3.400h3.400c1.300 0 2 .400 2.600 1.300l.700 1.100h10a2.700 2.700 0 0 1 2.700 2.700v11.600a2.700 2.700 0 0 1-2.700 2.700h-17a2.700 2.700 0 0 1-2.700-2.700z" fill="#ffdc78" stroke="#c89b22" stroke-width="1.500"/><path d="M1 6.200h5.800c1.300 0 2.200-.600 2.800-1.600l.800-1.300" fill="none" stroke="#c89b22" stroke-width="1.300"/></svg>
<span class="btx" style="left:574px">快手</span>
<svg class="bic" style="left:634px" width="24" height="24" viewBox="0 0 24 24"><rect x="0" y="0" width="11.200" height="11.200" fill="#f25022"/><rect x="12.800" y="0" width="11.200" height="11.200" fill="#7fba00"/><rect x="0" y="12.800" width="11.200" height="11.200" fill="#00a4ef"/><rect x="12.800" y="12.800" width="11.200" height="11.200" fill="#ffb900"/></svg>
<span class="btx" style="left:670px">搜索 | Microsoft Lea...</span>
<svg class="bic" style="left:864px" width="24" height="24" viewBox="0 0 24 24"><path d="M6 6c2-3 8-4 11-1 2 2 3 5 1 8l1 6c-3 2-9 2-12 0l1-5c-3-2-4-5-2-8z" fill="#e9e9e9"/><path d="M8 7c2-2 6-2 8 0l-1 3c-2 1-4 1-6 0z" fill="#b9b9b9"/><circle cx="10" cy="12" r="1" fill="#9a9a9a"/><circle cx="14" cy="12" r="1" fill="#9a9a9a"/></svg>
<span class="btx" style="left:901px">Typora 免费序列号_...</span>
<svg class="bic" style="left:1095px;top:14px" width="24" height="22" viewBox="0 0 24 22"><path d="M.800 4.200a3 3 0 0 1 3-3.400h3.400c1.300 0 2 .400 2.600 1.300l.700 1.100h10a2.700 2.700 0 0 1 2.700 2.700v11.600a2.700 2.700 0 0 1-2.700 2.700h-17a2.700 2.700 0 0 1-2.700-2.700z" fill="#ffdc78" stroke="#c89b22" stroke-width="1.500"/><path d="M1 6.200h5.800c1.300 0 2.200-.600 2.800-1.600l.800-1.300" fill="none" stroke="#c89b22" stroke-width="1.300"/></svg>
<span class="btx" style="left:1131px">git</span>
<svg class="bic" style="left:1177px;top:14px" width="24" height="22" viewBox="0 0 24 22"><path d="M.800 4.200a3 3 0 0 1 3-3.400h3.400c1.300 0 2 .400 2.600 1.300l.700 1.100h10a2.700 2.700 0 0 1 2.700 2.700v11.600a2.700 2.700 0 0 1-2.700 2.700h-17a2.700 2.700 0 0 1-2.700-2.700z" fill="#ffdc78" stroke="#c89b22" stroke-width="1.500"/><path d="M1 6.200h5.800c1.300 0 2.200-.600 2.800-1.600l.800-1.300" fill="none" stroke="#c89b22" stroke-width="1.300"/></svg>
<span class="btx" style="left:1213px">技术文章</span>
<svg class="bic" style="left:1309px;top:14px" width="24" height="22" viewBox="0 0 24 22"><path d="M.800 4.200a3 3 0 0 1 3-3.400h3.400c1.300 0 2 .400 2.600 1.300l.700 1.100h10a2.700 2.700 0 0 1 2.700 2.700v11.600a2.700 2.700 0 0 1-2.700 2.700h-17a2.700 2.700 0 0 1-2.700-2.700z" fill="#ffdc78" stroke="#c89b22" stroke-width="1.500"/><path d="M1 6.200h5.800c1.300 0 2.200-.600 2.800-1.600l.800-1.300" fill="none" stroke="#c89b22" stroke-width="1.300"/></svg>
<span class="btx" style="left:1345px">translate</span>
<svg class="bic" style="left:1438px;top:14px" width="24" height="22" viewBox="0 0 24 22"><path d="M.800 4.200a3 3 0 0 1 3-3.400h3.400c1.300 0 2 .400 2.600 1.300l.700 1.100h10a2.700 2.700 0 0 1 2.700 2.700v11.600a2.700 2.700 0 0 1-2.700 2.700h-17a2.700 2.700 0 0 1-2.700-2.700z" fill="#ffdc78" stroke="#c89b22" stroke-width="1.500"/><path d="M1 6.200h5.800c1.300 0 2.200-.600 2.800-1.600l.800-1.300" fill="none" stroke="#c89b22" stroke-width="1.300"/></svg>
<span class="btx" style="left:1474px">运维</span>
<svg class="bic" style="left:1534px;top:14px" width="24" height="22" viewBox="0 0 24 22"><path d="M.800 4.200a3 3 0 0 1 3-3.400h3.400c1.300 0 2 .400 2.600 1.300l.700 1.100h10a2.700 2.700 0 0 1 2.700 2.700v11.600a2.700 2.700 0 0 1-2.700 2.700h-17a2.700 2.700 0 0 1-2.700-2.700z" fill="#ffdc78" stroke="#c89b22" stroke-width="1.500"/><path d="M1 6.200h5.800c1.300 0 2.200-.600 2.800-1.600l.800-1.300" fill="none" stroke="#c89b22" stroke-width="1.300"/></svg>
<span class="btx" style="left:1570px">常用网站</span>
<svg class="bic" style="left:1666px" width="24" height="24" viewBox="0 0 24 24"><path d="M0 2h24v4l-3 1v15l-6 1v-14l-6 2v13l-9-3z" fill="#3f88e8"/><path d="M2 4h20l-1 1.500-8 2.500v13l-3-1v-13l-8 2z" fill="#dfeaf8"/><path d="M0 2l4 3v16l-4-1z" fill="#2a62c2"/></svg>
<span class="btx" style="left:1702px">我的工作台 - TAPD...</span>
<svg class="bic" style="left:1890px;top:14px" width="24" height="22" viewBox="0 0 24 22"><path d="M.800 4.200a3 3 0 0 1 3-3.400h3.400c1.300 0 2 .400 2.600 1.300l.700 1.100h10a2.700 2.700 0 0 1 2.700 2.700v11.600a2.700 2.700 0 0 1-2.700 2.700h-17a2.700 2.700 0 0 1-2.700-2.700z" fill="#ffdc78" stroke="#c89b22" stroke-width="1.500"/><path d="M1 6.200h5.800c1.300 0 2.200-.600 2.800-1.600l.800-1.300" fill="none" stroke="#c89b22" stroke-width="1.300"/></svg>
<span class="btx" style="left:1926px">Email</span>
<svg class="bic" style="left:2306px;top:14px" width="24" height="22" viewBox="0 0 24 22"><path d="M.800 4.200a3 3 0 0 1 3-3.400h3.400c1.300 0 2 .400 2.600 1.300l.700 1.100h10a2.700 2.700 0 0 1 2.700 2.700v11.600a2.700 2.700 0 0 1-2.700 2.700h-17a2.700 2.700 0 0 1-2.700-2.700z" fill="#ffdc78" stroke="#c89b22" stroke-width="1.500"/><path d="M1 6.200h5.800c1.300 0 2.200-.600 2.800-1.600l.800-1.300" fill="none" stroke="#c89b22" stroke-width="1.300"/></svg>
<span class="btx" style="left:2343px">其他收藏夹</span>
<i class="abs" style="left:2291px;top:12px;width:1px;height:26px;background:#d0d0d0"></i>
<!--/BM-->
</div>
<div id="page">
  <div id="banner">
    <div id="bannerart">
<!--ART-->
<svg width="2431" height="227" viewBox="0 0 2431 227" style="position:absolute;left:0;top:0">
<defs>
<linearGradient id="bw" x1="0" y1="0" x2="1" y2="0"><stop offset="0" stop-color="#fff" stop-opacity=".09"/><stop offset="1" stop-color="#fff" stop-opacity="0"/></linearGradient>
<radialGradient id="br" cx="0.93" cy="0" r="0.35" gradientTransform="scale(1 3)"><stop offset="0" stop-color="#3aa8ff" stop-opacity=".35"/><stop offset="1" stop-color="#3aa8ff" stop-opacity="0"/></radialGradient>
<linearGradient id="bt" x1="0" y1="0" x2="0" y2="1"><stop offset="0" stop-color="#fff" stop-opacity=".110"/><stop offset="1" stop-color="#fff" stop-opacity=".07"/></linearGradient>
</defs>
<rect width="2431" height="227" fill="url(#br)"/>
<path d="M0 0h150c-40 42-95 70-150 87z" fill="#fff" opacity=".085"/>
<g fill="none" stroke="#fff" stroke-opacity=".05" stroke-width="1">
<path d="M900 227c300-40 700-120 1100-227"/><path d="M1000 227c300-40 700-110 1150-227"/><path d="M1100 227c300-30 700-100 1200-210"/><path d="M1250 227c300-30 600-80 1100-180"/><path d="M1400 227c300-30 500-60 1000-150"/><path d="M700 227c300-50 700-130 1000-227"/><path d="M500 227c300-50 700-140 1000-227"/>
</g>
<g fill="url(#bt)">
<path d="M2268 24c0-12 34-12 34 0l-6 96 5 107h-29l5-107z"/>
<path d="M2213 150c0-8 30-22 44-18v95h-44z"/>
<path d="M2219 170c0-8 24-20 32-16v73h-32z" opacity=".6"/>
<path d="M2229 100l33-12v139h-33z" opacity=".45"/>
<path d="M2314 100c0-8 30-20 46-16v143h-46z"/>
<path d="M2340 100l20-14v141h-20z" opacity=".6"/>
<path d="M2306 60h20v167h-20z" opacity=".35"/>
<path d="M2370 146c0-8 14-8 40 10v71h-40z"/>
<path d="M2364 90h21v137h-21z" opacity=".35"/>
</g>
<g fill="#fff" fill-opacity=".12"><circle cx="2268" cy="8" r="4"/><circle cx="2241" cy="49" r="4"/><circle cx="2215" cy="63" r="2.500"/><circle cx="2193" cy="120" r="3.500"/><circle cx="2197" cy="195" r="7"/><circle cx="2369" cy="55" r="7"/><circle cx="2408" cy="23" r="3.500"/><circle cx="2342" cy="214" r="8"/></g>
<g fill="none" stroke="#fff" stroke-opacity=".07" stroke-width="1"><path d="M2268 8l-53 55-22 57 4 75M2215 63l60 70M2268 8l101 47 39-32M2369 55l60 30M2369 55l-60 40M2408 23l23-10M2193 120l30 25"/></g>
<rect width="2431" height="2" fill="#1769c4" opacity=".8"/>
</svg>

<!--/ART-->
</div>
    <div id="logo">
<!--LOGO-->
<svg width="113" height="111" viewBox="0 0 113 111"><defs><linearGradient id="lgs" x1="0" y1="0" x2="1" y2="0"><stop offset="0" stop-color="#33bdf8"/><stop offset=".45" stop-color="#1b97ea"/><stop offset="1" stop-color="#0d74d2"/></linearGradient><linearGradient id="lge" x1="0" y1="0" x2="1" y2="1"><stop offset="0" stop-color="#ff5a05"/><stop offset=".6" stop-color="#fb5500"/><stop offset="1" stop-color="#f2731c"/></linearGradient></defs><path d="M37.9 53.5C38.4 55.2 40.1 61.7 43.4 64.5C46.7 67.3 52.6 69.4 57.5 70.1C62.4 70.8 67.6 70.0 72.6 68.6C77.6 67.2 83.0 64.2 87.7 61.5C92.4 58.8 97.1 56.0 100.8 52.5C104.5 49.0 108.2 43.6 109.9 40.4C111.6 37.2 111.7 35.5 111.0 33.3C110.3 31.1 108.0 28.7 105.8 27.3C103.6 25.9 100.6 24.9 97.8 24.8C95.0 24.7 90.5 23.2 89.0 26.5C87.5 29.8 89.7 39.7 88.5 44.4C87.3 49.1 84.9 51.5 81.7 54.5C78.5 57.5 73.6 60.8 69.6 62.5C65.6 64.2 61.4 64.8 57.5 64.5C53.6 64.2 49.2 62.2 46.4 60.5C43.5 58.8 41.8 55.7 40.4 54.5C39.0 53.3 37.4 51.8 37.9 53.5Z" fill="url(#lgs)"/><g fill="#f2471c"><rect x="74.5" y="9.2" width="9.800" height="9.800" rx="1.800" transform="rotate(33.0 79.4 14.1)"/><rect x="56.2" y="2.0" width="9.800" height="9.800" rx="1.800" transform="rotate(10.0 61.1 6.9)"/><rect x="34.8" y="2.9" width="9.800" height="9.800" rx="1.800" transform="rotate(-15.0 39.7 7.8)"/><rect x="16.1" y="12.5" width="9.800" height="9.800" rx="1.800" transform="rotate(-39.6 21.0 17.4)"/><rect x="2.9" y="29.5" width="9.800" height="9.800" rx="1.800" transform="rotate(-64.7 7.8 34.4)"/><rect x="-1.8" y="50.6" width="9.800" height="9.800" rx="1.800" transform="rotate(270.0 3.1 55.5)"/><rect x="3.4" y="72.7" width="9.800" height="9.800" rx="1.800" transform="rotate(243.4 8.3 77.6)"/><rect x="17.9" y="90.1" width="9.800" height="9.800" rx="1.800" transform="rotate(217.0 22.8 95.0)"/><rect x="37.8" y="99.0" width="9.800" height="9.800" rx="1.800" transform="rotate(191.5 42.7 103.9)"/><rect x="57.9" y="98.9" width="9.800" height="9.800" rx="1.800" transform="rotate(168.0 62.8 103.8)"/><rect x="77.3" y="90.1" width="9.800" height="9.800" rx="1.800" transform="rotate(143.0 82.2 95.0)"/></g><path d="M90.2 74.1C91.2 74.6 86.1 82.5 83.6 85.6C81.0 88.6 77.9 90.5 74.8 92.3C71.6 94.1 68.0 95.6 64.5 96.6C61.0 97.5 57.2 98.0 53.5 98.0C49.8 98.0 46.0 97.5 42.5 96.6C39.0 95.6 35.4 94.1 32.3 92.3C29.1 90.5 26.0 88.1 23.4 85.6C20.9 83.0 18.5 79.9 16.7 76.8C14.9 73.6 13.4 70.0 12.4 66.5C11.5 63.0 11.0 59.2 11.0 55.5C11.0 51.8 11.5 48.0 12.4 44.5C13.4 41.0 14.9 37.4 16.7 34.2C18.5 31.1 20.9 28.0 23.4 25.4C26.0 22.9 29.1 20.5 32.2 18.7C35.4 16.9 39.0 15.4 42.5 14.4C46.0 13.5 49.8 13.0 53.5 13.0C57.2 13.0 61.0 13.5 64.5 14.4C68.0 15.4 71.8 16.6 74.8 18.7C77.7 20.8 80.4 23.9 82.1 26.9C83.9 29.8 84.9 33.4 85.2 36.3C85.5 39.2 85.0 41.5 83.7 44.4C82.4 47.3 80.3 50.8 77.6 53.5C74.9 56.2 71.3 59.0 67.6 60.5C63.9 62.0 59.0 62.8 55.5 62.5C52.0 62.2 48.5 60.3 46.4 58.5C44.3 56.7 42.6 54.4 42.9 51.5C43.2 48.6 47.6 41.9 48.4 41.4C49.1 40.9 46.9 46.2 47.4 48.4C47.9 50.6 49.5 53.3 51.5 54.5C53.5 55.7 56.8 56.2 59.5 55.5C62.2 54.8 65.2 52.6 67.6 50.4C69.9 48.2 72.3 44.9 73.6 42.4C74.8 39.9 75.4 37.6 75.1 35.3C74.8 32.9 73.9 30.1 71.6 28.3C69.3 26.6 65.5 24.8 61.5 24.8C57.5 24.8 51.4 26.4 47.4 28.3C43.4 30.2 40.0 32.9 37.4 36.3C34.8 39.6 32.6 44.4 31.8 48.4C30.9 52.4 31.0 56.3 32.3 60.5C33.6 64.7 36.2 69.9 39.4 73.6C42.6 77.3 47.5 80.8 51.5 82.7C55.5 84.6 59.1 85.2 63.5 85.2C67.8 85.2 73.1 84.6 77.6 82.7C82.0 80.8 89.2 73.6 90.2 74.1Z" fill="url(#lge)"/></svg>
<!--/LOGO-->
</div>
    <div id="sub">工业和信息化部政务服务平台</div>
    <div id="ttl">ICP/IP地址/域名信息备案管理系统</div>
  </div>
  <div id="nav">
    <div id="navin"><span class="ni act">首页</span><span class="ni">ICP备案查询</span><span class="ni">短信核验</span><span class="ni">违法违规域名查询</span><span class="ni">电子化核验申请</span><span class="ni">通知公告</span><span class="ni">政策文件</span></div>
  </div>
  <div id="search">
    <div id="sinput">ICP备案查询：请输入单位名称或域名或备案号查询，请勿使用子域名或者带http://www等字符的网址查询</div>
    <div id="sbtn"><svg width="26" height="26" viewBox="0 0 26 26" fill="none" stroke="#fff" stroke-width="2" stroke-linecap="round"><circle cx="12" cy="12" r="9.500"/><path d="M19 19l3.500 3.500"/></svg><span>搜索</span></div>
    <span class="rad on" style="left:1579px"></span><span class="rl" style="left:1615px;color:#409eff">网站</span>
    <span class="rad" style="left:1681px"></span><span class="rl" style="left:1717px">APP</span>
    <span class="rad" style="left:1783px"></span><span class="rl" style="left:1818px">小程序</span>
    <span class="rad" style="left:1885px"></span><span class="rl" style="left:1921px">快应用</span>
  </div>
  <div id="left">
<!--LEFT-->
<div class="sech" style="top:452px"><span class="secht">通知公告</span><svg class="horn" width="30" height="26" viewBox="0 0 30 26"><path d="M1 9h5.500l8.500-7.500v23l-8.500-7.500h-5.500z" fill="#1a8af0"/><path d="M19.500 6.500l4.500-4M20.500 13h7.500M19.500 19.500l4.500 4" stroke="#1a8af0" stroke-width="2.600" fill="none" stroke-linecap="round"/></svg><span class="more">更多&gt;&gt;</span></div>
<div class="row" style="top:521.5px"><i class="dia"></i><span class="rt">湖南省空壳主体空壳网站空壳APP公示<span class="dg2">2023.11.6</span></span><span class="rp">湖南</span><span class="rd">2023-11-08 10:51:26</span></div>
<div class="row" style="top:590.5px"><i class="dia"></i><span class="rt">湖北省通信管理局关于清理互联网空壳网站的公示</span><span class="rp">湖北</span><span class="rd">2023-11-07 10:12:08</span></div>
<div class="row hl" style="top:659.5px"><i class="dia"></i><span class="rt">江西省通信管理局关于清理<span class="dg">20231106</span>批次空壳数据公示</span><span class="rp">江西</span><span class="rd">2023-11-06 15:57:36</span></div>
<div class="row" style="top:728.5px"><i class="dia"></i><span class="rt">山东省通信管理局关于清理空壳类备案数据的公示 (<span class="dg">202337</span>批次)</span><span class="rp">山东</span><span class="rd">2023-11-06 12:51:03</span></div>
<div class="row" style="top:797.5px"><i class="dia"></i><span class="rt">湖南省空壳主体空壳网站空壳APP公示<span class="dg2">2023.10.16-10.30</span></span><span class="rp">湖南</span><span class="rd">2023-11-03 10:53:22</span></div>
<div class="row" style="top:866.5px"><i class="dia"></i><span class="rt">陕西省空壳网站数据公示（<span class="dg">2023</span>年第<span class="dg">20</span>批次）</span><span class="rp">陕西</span><span class="rd">2023-11-03 09:55:54</span></div>
<div class="sech" style="top:935px"><span class="secht">政策文件</span><span class="more">更多&gt;&gt;</span></div>
<div class="row" style="top:1004.5px"><i class="dia"></i><span class="rt">《关于建立境内违法互联网站黑名单管理制度的通知》（工信部联</span><span class="rp">工信部</span><span class="rd" style="color:#c0c2c6">2023-11-12 11:02:39</span></div>
<div class="row" style="top:1073.5px"><i class="dia"></i><span class="rt">工业和信息化部关于开展互联网信息服务备案用户真实身份信息电</span><span class="rp">工信部</span><span class="rd">2020-10-13 15:00:00</span></div>
<div class="row" style="top:1142.5px"><i class="dia"></i><span class="rt">工业和信息化部关于规范互联网信息服务使用域名的通知</span><span class="rp">工信部</span><span class="rd">2020-10-13 14:57:00</span></div>
<!--/LEFT-->
  </div>
  <div id="right">
    <div class="rtab" style="left:0;width:228px;color:#333">短信核验</div>
    <div class="rtab" style="left:228px;width:231px;color:#999">短信重发</div>
    <i class="abs" style="left:0;top:59px;width:459px;height:1px;background:#e2e2e2"></i>
    <i class="abs" style="left:0;top:58px;width:229px;height:3.500px;background:#1f83d0"></i>
    <div class="inp" style="top:113px"><span class="pre"><svg width="30" height="32" viewBox="0 0 30 32"><rect x="2.500" y="2.500" width="15" height="25" rx="2.500" fill="none" stroke="#8a8a8a" stroke-width="2.200"/><rect x="11" y="13" width="17" height="13" rx="2" fill="#8a8a8a" stroke="#fff" stroke-width="1.500"/><circle cx="15.500" cy="19.500" r="1.400" fill="#fff"/><circle cx="19.500" cy="19.500" r="1.400" fill="#fff"/><circle cx="23.500" cy="19.500" r="1.400" fill="#fff"/></svg></span><i class="dv"></i><span class="val">514948</span></div>
    <div class="inp" style="top:210px"><span class="pre"><svg width="30" height="32" viewBox="0 0 30 32"><rect x="2.500" y="2.500" width="19" height="28" rx="4" fill="#8c8c8c"/><rect x="5" y="7" width="14" height="18.500" rx=".5" fill="#fff"/><rect x="9.500" y="27" width="5" height="1.600" rx=".8" fill="#e8e8e8"/></svg></span>
      <i class="mz" style="left:40px;top:10px;width:150px;height:44px;background:#fafafa"></i><i class="mz" style="left:88px;top:26px;width:30px;height:28px;background:#d4d4d6"></i><i class="mz" style="left:146px;top:26px;width:30px;height:28px;background:#e4e4e4"></i><i class="mz" style="left:176px;top:3px;width:30px;height:50px;background:#dedede"></i><i class="mz" style="left:236px;top:8px;width:60px;height:16px;background:#fbfbfb"></i>
    </div>
    <div class="inp" style="top:308px"><span class="pre" style="top:17px"><svg width="30" height="28" viewBox="0 0 30 28"><rect x="2" y="3" width="26" height="21" rx="2.500" fill="#eee" stroke="#8a8a8a" stroke-width="2"/><circle cx="10.500" cy="10.500" r="3.200" fill="#7d7d7d"/><path d="M4.500 20c0-4 2.500-5.500 6-5.500s6 1.500 6 5.500z" fill="#7d7d7d"/><path d="M18 9h7M18 12.500h7M18 16h5" stroke="#aaa" stroke-width="1.600"/></svg></span><i class="dv"></i><span class="val">183019</span></div>
    <div id="submit">提 交</div>
    <i class="abs" style="left:0;top:541px;width:459px;height:1px;background:#e2e2e2"></i>
    <div class="card" style="top:573px"><div class="cic" style="background:#5b8de8"><svg width="56" height="56" viewBox="0 0 56 56"><path d="M24 22v-12a3 3 0 0 1 3-3h20.500a3 3 0 0 1 3 3v13a3 3 0 0 1-3 3h-3.500l-5 5.500v-5.500h-5" fill="none" stroke="#fff" stroke-width="3.200" stroke-linejoin="round"/><circle cx="18.500" cy="24" r="10" fill="#fff" stroke="#5b8de8" stroke-width="2.400"/><path d="M4 50c0-9 5-14.500 14.500-14.500s15.500 5.500 15.500 14.500c0 1.500-1 2-2 2h-26c-1 0-2-.500-2-2z" fill="#fff"/></svg></div><div class="ctx">备案问题咨询</div></div>
    <div class="card" style="top:708px"><div class="cic" style="background:#3aa8ff"><svg width="56" height="56" viewBox="0 0 56 56" fill="#fff" style="top:33px"><path d="M28 0l6 8h-12z"/></svg></div><div class="ctx">用户手册下载</div></div>
  </div>
  <div id="tel">
    <svg width="60" height="52" viewBox="0 0 62 54" fill="#8c8c8c" style="position:absolute;left:63px;top:29px"><path d="M2 16c0-9 12-14.500 29-14.500s29 5.500 29 14.500v3a3 3 0 0 1-3 3h-8a3 3 0 0 1-3-3v-4c-4-2.500-9-3.500-15-3.500s-11 1-15 3.500v4a3 3 0 0 1-3 3h-8a3 3 0 0 1-3-3z"/><path d="M22 17h4v4h10v-4h4v4c6 2.500 14 12 14 22v5a4 4 0 0 1-4 4h-38a4 4 0 0 1-4-4v-5c0-10 8-19.500 14-22z"/><circle cx="31" cy="37.500" r="8" fill="#fff"/></svg>
    <div id="tel1">全国咨询电话</div><div id="tel2">010-66411166</div>
  </div>
  <div id="toast">
    <span id="ticon"><svg width="38" height="38" viewBox="0 0 38 38"><circle cx="19" cy="19" r="18.300" fill="#8dc21f" stroke="#3d5a12" stroke-width=".800"/><path d="M11.500 19.500l5.500 5.500 10.500-11" fill="none" stroke="#2f2f2f" stroke-width="3.200" stroke-linecap="round" stroke-linejoin="round"/></svg></span>
    <span id="tt1">尊敬的ICP用户：</span><span id="tt2">您的短信核验已全部完成,该请求将提交管局审核。</span>
    <svg id="tclose" width="20" height="20" viewBox="0 0 20 20"><path d="M2 2l16 16m0-16l-16 16" stroke="#fff" stroke-width="3.400" fill="none"/></svg>
  </div>
  <div id="redbox"></div>
</div>
<div id="sb">
<svg class="abs" style="left:5px;top:12px" width="14" height="11" viewBox="0 0 14 11"><path d="M7 .5l6.700 10h-13.400z" fill="#8b8b8b"/></svg>
<div class="abs" style="left:5px;top:34px;width:13px;height:845px;border-radius:6.500px;background:#8b8b8b"></div>
<svg class="abs" style="left:5px;top:1183px" width="14" height="11" viewBox="0 0 14 11"><path d="M7 10.500l6.700-10h-13.400z" fill="#8b8b8b"/></svg>
</div>
<div id="side">
<svg class="abs" style="left:18px;top:19px" width="27" height="27" viewBox="0 0 27 27"><path d="M15 15l9 9" stroke="#c24fd6" stroke-width="4.200" stroke-linecap="round"/><circle cx="10" cy="10" r="7.600" fill="#d6e8f6" stroke="#5c6066" stroke-width="3"/><path d="M5.500 9a5 5 0 0 1 4-3.500" stroke="#fff" stroke-width="1.600" fill="none" stroke-linecap="round"/></svg>
<svg class="abs" style="left:19px;top:80px" width="30" height="27" viewBox="0 0 40 36"><defs><linearGradient id="tg" x1="0" y1="0" x2="1" y2="1"><stop offset="0" stop-color="#3f7df0"/><stop offset="1" stop-color="#4a3fd8"/></linearGradient></defs><path d="M2 19l17-14c2-1.500 4-2 6-2h10c2 0 3 1 3 3v8c0 2-.500 4-2 5.500l-15 13c-2 1.500-4 1.500-5.500 0l-9-8c-1.500-1.500-1.500-4 .500-5.500z" fill="url(#tg)"/><circle cx="30" cy="10" r="3.800" fill="#f5e16a"/></svg>
<svg class="abs" style="left:18px;top:144px" width="30" height="21" viewBox="0 0 40 28"><path d="M13 7v-2.500a3 3 0 0 1 3-3h8a3 3 0 0 1 3 3v2.500" fill="none" stroke="#8a8f96" stroke-width="3"/><rect x="0" y="7" width="40" height="20" rx="4" fill="#d9521f"/><rect x="0" y="7" width="40" height="9" rx="4" fill="#f06a2c"/><rect x="16" y="12" width="8" height="8" rx="1" fill="#e6e6e6"/><rect x="18.500" y="14" width="3" height="3.500" fill="#9a7a6a"/></svg>
<svg class="abs" style="left:18px;top:199px" width="30" height="30" viewBox="0 0 40 40"><path d="M19 27c0-3 3-6 3-12h-2v-13h5v4h3v-4h5v4h3v-4h4v13h-2c0 6 3 9 3 12z" fill="#c04df0"/><circle cx="11" cy="13" r="6.200" fill="#6e6e6e"/><path d="M5 20h12l-2.500 3c1 4 3 6 5.500 8v3h-18v-3c2.500-2 4.500-4 5.500-8z" fill="#555"/><rect x="0" y="32" width="22" height="5" rx="2" fill="#3a3a3a"/></svg>
<svg class="abs" style="left:19px;top:259px" width="30" height="28" viewBox="0 0 40 38"><defs><linearGradient id="mg1" x1="0" y1="0" x2="1" y2="1"><stop offset="0" stop-color="#3f8df5"/><stop offset="1" stop-color="#6a4fe0"/></linearGradient><linearGradient id="mg2" x1="0" y1="1" x2="1" y2="0"><stop offset="0" stop-color="#9a50e8"/><stop offset="1" stop-color="#e58adf"/></linearGradient></defs><path d="M20 1c8 0 14 4 14 11v8c0 3-3 6-8 6v-12c0-3-2-5-6-5s-6 2-6 5v11l-8-4v-9c0-7 6-11 14-11z" fill="url(#mg1)"/><path d="M34 20v6c0 7-6 11-14 11s-14-4-14-11l8 3c0 3 2 4 6 4s6-2 6-5v-3z" fill="url(#mg2)"/><circle cx="20" cy="19" r="5" fill="#d8e4f8"/></svg>
<svg class="abs" style="left:19px;top:318px" width="30" height="28" viewBox="0 0 40 38"><rect x="12" y="2" width="28" height="30" rx="3" fill="#1a8fe0"/><path d="M12 14h28v15a3 3 0 0 1-3 3h-25z" fill="#0f6cc0"/><path d="M22 20l18-6v15a3 3 0 0 1-3 3h-15z" fill="#35b0f0"/><rect x="0" y="8" width="22" height="22" rx="3" fill="#0f5fb5"/><ellipse cx="11" cy="19" rx="5.500" ry="6.200" fill="none" stroke="#fff" stroke-width="3"/></svg>
<svg class="abs" style="left:18px;top:382px" width="30" height="22" viewBox="0 0 40 30"><path d="M1 8l39-7-17 28-5-11z" fill="#3a8ee8"/><path d="M1 8l39-7-22 17z" fill="#f2b43c"/><path d="M18 18l22-17-17 28z" fill="#1f6fd0"/></svg>
<svg class="abs" style="left:22px;top:451px" width="18" height="18" viewBox="0 0 18 18"><path d="M9 0v18M0 9h18" stroke="#222" stroke-width="1.500" fill="none"/></svg>
<div class="abs" style="left:43px;top:1030px;width:10px;height:61px;border-radius:3px;background:#2b2b2b"></div>
<svg class="abs" style="left:19px;top:1150px" width="25" height="25" viewBox="0 0 26 26" fill="none" stroke="#222" stroke-width="1.500"><rect x="1.500" y="2.500" width="22" height="15" rx="3" stroke-dasharray="3.500 2.200"/><circle cx="9" cy="21" r="2.600"/><circle cx="16.500" cy="21" r="2.600"/><path d="M10.500 19l5.500-9M15 19l-5.500-9"/></svg>
<i class="abs" style="left:11px;top:1196px;width:40px;height:1px;background:#cfcfcf"></i>
<svg class="abs" style="left:17px;top:1217px" width="28" height="28" viewBox="0 0 24 24" fill="none" stroke="#222" stroke-width="1.600" stroke-linejoin="round"><circle cx="12" cy="12" r="3.200"/><path d="M10.300 2.500h3.400l.600 2.700 1.900.800 2.300-1.500 2.400 2.400-1.500 2.300.800 1.900 2.700.600v3.400l-2.700.600-.800 1.900 1.500 2.300-2.400 2.400-2.300-1.500-1.900.800-.600 2.700h-3.400l-.600-2.700-1.900-.800-2.300 1.500-2.400-2.400 1.500-2.300-.800-1.900-2.700-.600v-3.400l2.700-.600.800-1.900-1.500-2.300 2.400-2.400 2.300 1.500 1.900-.800z"/></svg>
</div>
<div id="wm">知乎 @根号三</div>
</body>
</html>
